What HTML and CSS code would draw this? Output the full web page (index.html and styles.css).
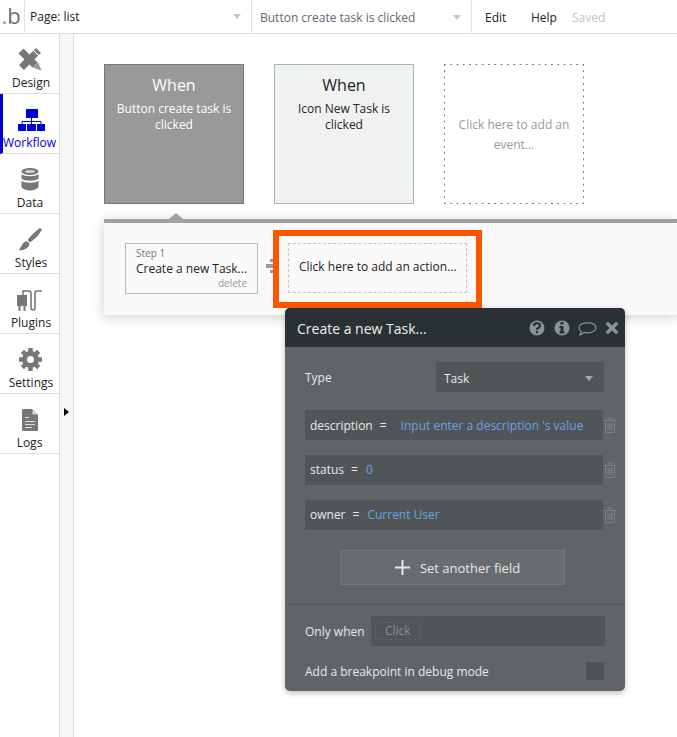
FILE: index.html
```html
<!DOCTYPE html>
<html lang="en">
<head>
    <meta charset="UTF-8">
    <title>Workflow editor</title>
    <link rel="stylesheet" href="styles.css">
</head>
<body>
    <div class="topbar">
        <div class="logo"><span class="logo-dot">.</span>b</div>
        <div class="select page-select">
            <span>Page: list</span>
            <i class="caret"></i>
        </div>
        <div class="select event-select">
            <span>Button create task is clicked</span>
            <i class="caret"></i>
        </div>
        <div class="menu">
            <span class="menu-edit">Edit</span>
            <span class="menu-help">Help</span>
            <span class="menu-saved">Saved</span>
        </div>
    </div>

    <div class="main">
        <div class="sidebar">
            <div class="tab">
                <svg class="tab-icon" width="24" height="24" viewBox="0 0 24 24">
                    <path fill="none" stroke="#777" stroke-width="7" d="M3 4 L17 18"/>
                    <path fill="#999" d="M14.500 20.500 L20 15 L23.500 23.500 Z"/>
                    <path fill="none" stroke="#777" stroke-width="7" stroke-dasharray="3 1 24" d="M20.500 3.500 L3.500 20.500"/>
                    <path fill="none" stroke="#777" stroke-width="4" d="M3 17 L7 21"/>
                </svg>
                <span>Design</span>
            </div>
            <div class="tab tab-active">
                <svg class="tab-icon" width="27" height="22" viewBox="0 0 27 22">
                    <path fill="#0000d8" d="M8 0 H20 V9 H8 Z M0 15 H8 V22 H0 Z M9 15 H18 V22 H9 Z M19 15 H27 V22 H19 Z"/>
                    <path fill="none" stroke="#0000d8" d="M13.500 9 V15 M4 15 V12.500 H23 V15"/>
                </svg>
                <span>Workflow</span>
            </div>
            <div class="tab">
                <svg class="tab-icon" width="18" height="23" viewBox="0 0 18 23">
                    <ellipse cx="9" cy="3.500" rx="8.500" ry="3.500" fill="#777"/>
                    <ellipse cx="9" cy="3.500" rx="5" ry="1.300" fill="#ddd"/>
                    <path fill="#777" d="M0.500 6 C3 9 15 9 17.500 6 V10.500 C15 13.500 3 13.500 0.500 10.500 Z M0.500 12.500 C3 15.500 15 15.500 17.500 12.500 V19 C15 23.500 3 23.500 0.500 19 Z"/>
                </svg>
                <span class="tab-label-plain">Data</span>
            </div>
            <div class="tab">
                <svg class="tab-icon" width="24" height="23" viewBox="0 0 24 23">
                    <path fill="#777" d="M22 0 L24 1.500 C21 7 17 11 12 14.500 L9.500 12 C13 7.500 17 3.500 22 0 Z M8.500 13 L11.500 15.500 C11 20 6 23 0.500 22 C3.500 20.500 3 15 8.500 13 Z"/>
                </svg>
                <span>Styles</span>
            </div>
            <div class="tab">
                <svg class="tab-icon" width="26" height="21" viewBox="0 0 26 21">
                    <path fill="#777" d="M0 5 H10 V16 H8.500 V21 H6.500 V16 H3.500 V21 H1.500 V16 H0 Z"/>
                    <path fill="none" stroke="#777" stroke-width="1.600" d="M6 5 V1 H12 Q14 1 14 3.500 V17.500 Q14 20 16 20 Q18 20 18 17.500 V3.500 Q18 1 20 1 H25"/>
                </svg>
                <span>Plugins</span>
            </div>
            <div class="tab">
                <svg class="tab-icon" width="23" height="23" viewBox="0 0 23 23">
                    <circle cx="11.500" cy="11.500" r="6" fill="none" stroke="#777" stroke-width="5"/>
                    <path fill="none" stroke="#777" stroke-width="4.500" d="M11.500 0 V4 M11.500 19 V23 M0 11.500 H4 M19 11.500 H23 M3.400 3.400 L6 6 M17 17 L19.600 19.600 M3.400 19.600 L6 17 M17 6 L19.600 3.400"/>
                </svg>
                <span>Settings</span>
            </div>
            <div class="tab tab-logs">
                <svg class="tab-icon" width="16" height="22" viewBox="0 0 16 22">
                    <path fill="#777" d="M1 0 H10 L16 6 V21 Q16 22 15 22 H1 Q0 22 0 21 V1 Q0 0 1 0 Z"/>
                    <path fill="none" stroke="#ddd" d="M3 8.500 H7 M3 12.500 H13 M3 15.500 H13 M3 18.500 H10"/>
                    <path fill="#ddd" d="M10.500 1 L15 5.500 H10.500 Z"/>
                </svg>
                <span class="tab-label-plain">Logs</span>
            </div>
        </div>
        <div class="strip"><i class="strip-arrow"></i></div>

        <div class="canvas">
            <div class="events">
                <div class="event event-selected">
                    <div class="event-title">When</div>
                    <div class="event-text">Button create task is clicked</div>
                </div>
                <div class="event event-other">
                    <div class="event-title">When</div>
                    <div class="event-text">Icon New Task is clicked</div>
                </div>
                <div class="event event-add">Click here to add an event...</div>
            </div>

            <div class="steps">
                <i class="steps-notch"></i>
                <div class="step">
                    <div class="step-num">Step 1</div>
                    <div class="step-name">Create a new Task...</div>
                    <div class="step-delete">delete</div>
                </div>
                <svg class="step-arrow" width="11" height="14" viewBox="0 0 11 14">
                    <path fill="#999" d="M4 0 H7 L10 3 H4 Z M0 5 H11 V9 H0 Z M4 11 H10 L7 14 H4 Z"/>
                </svg>
                <div class="highlight">
                    <div class="add-action">Click here to add an action...</div>
                </div>
            </div>
        </div>
    </div>

    <div class="popup">
        <div class="popup-head">
            <span class="popup-title">Create a new Task...</span>
            <svg class="popup-icons" width="90" height="18" viewBox="0 0 90 18">
                <circle cx="8" cy="9" r="7.500" fill="#8c9396"/>
                <path fill="none" stroke="#2a3133" stroke-width="2.200" d="M5 7 Q5 4.200 8 4.200 Q11 4.200 11 6.800 Q11 8.300 8.800 9.300 Q8 9.800 8 11"/>
                <rect x="6.900" y="12" width="2.200" height="2.200" fill="#2a3133"/>
                <circle cx="33" cy="9" r="7.500" fill="#8c9396"/>
                <path fill="#2a3133" d="M31.500 3 H34.500 V5.500 H31.500 Z M30.500 7 H34.500 V12.500 H35.500 V14.500 H30.500 V12.500 H31.500 V9 H30.500 Z"/>
                <path fill="none" stroke="#8c9396" stroke-width="1.200" d="M50 9 C50 5.500 54 3.800 58.500 3.800 C63 3.800 67 5.500 67 9 C67 12 63 13.800 58.500 13.800 Q56.500 13.800 55 13.400 Q53.500 15.500 50.800 15.800 Q52.300 14 52.300 12.700 Q50 11.300 50 9 Z"/>
                <path fill="#8c9396" d="M76.500 5 L79 2.700 L83 6.500 L87 2.700 L89.500 5 L85.500 9 L89.500 13 L87 15.300 L83 11.500 L79 15.300 L76.500 13 L80.500 9 Z"/>
            </svg>
        </div>
        <div class="popup-body">
            <div class="type-row">
                <span class="type-label">Type</span>
                <div class="type-select">
                    <span>Task</span>
                    <i class="caret caret-dark"></i>
                </div>
            </div>

            <div class="field-row">
                <div class="field field-first">
                    <span class="field-name">description</span><span class="field-eq">=</span><span class="field-value field-value-wide">Input enter a description 's value</span>
                </div>
                <svg class="trash" width="12" height="16" viewBox="0 0 12 16">
                    <path fill="none" stroke="#7b8083" d="M0 3.500 H12 M4 3.500 V1 H8 V3.500 M1.500 3.500 V15 Q1.500 15.500 2 15.500 H10 Q10.500 15.500 10.500 15 V3.500"/>
                    <path fill="none" stroke="#7b8083" stroke-width="1.300" d="M4 6 V13 M6 6 V13 M8 6 V13"/>
                </svg>
            </div>
            <div class="field-row">
                <div class="field">
                    <span class="field-name">status</span><span class="field-eq">=</span><span class="field-value">0</span>
                </div>
                <svg class="trash" width="12" height="16" viewBox="0 0 12 16">
                    <path fill="none" stroke="#7b8083" d="M0 3.500 H12 M4 3.500 V1 H8 V3.500 M1.500 3.500 V15 Q1.500 15.500 2 15.500 H10 Q10.500 15.500 10.500 15 V3.500"/>
                    <path fill="none" stroke="#7b8083" stroke-width="1.300" d="M4 6 V13 M6 6 V13 M8 6 V13"/>
                </svg>
            </div>
            <div class="field-row">
                <div class="field">
                    <span class="field-name">owner</span><span class="field-eq">=</span><span class="field-value">Current User</span>
                </div>
                <svg class="trash" width="12" height="16" viewBox="0 0 12 16">
                    <path fill="none" stroke="#7b8083" d="M0 3.500 H12 M4 3.500 V1 H8 V3.500 M1.500 3.500 V15 Q1.500 15.500 2 15.500 H10 Q10.500 15.500 10.500 15 V3.500"/>
                    <path fill="none" stroke="#7b8083" stroke-width="1.300" d="M4 6 V13 M6 6 V13 M8 6 V13"/>
                </svg>
            </div>

            <div class="set-field">
                <svg width="15" height="15" viewBox="0 0 15 15">
                    <path fill="#e4e6e7" d="M6.500 0 H8.500 V6.500 H15 V8.500 H8.500 V15 H6.500 V8.500 H0 V6.500 H6.500 Z"/>
                </svg>
                <span>Set another field</span>
            </div>
        </div>
        <div class="popup-foot">
            <div class="when-row">
                <span class="when-label">Only when</span>
                <div class="when-input"><span class="when-click">Click</span></div>
            </div>
            <div class="debug-row">
                <span>Add a breakpoint in debug mode</span>
                <i class="debug-check"></i>
            </div>
        </div>
    </div>
</body>
</html>
```

FILE: styles.css
```css
html, body {
    margin: 0;
    height: 100%;
    overflow: hidden;
}

body {
    position: relative;
    font-family: "Open Sans", sans-serif;
    font-size: 12px;
    color: #222;
    background: #fff;
}

.topbar {
    display: flex;
    height: 33px;
    border-bottom: 1px solid #dedede;
}

.logo {
    width: 25px;
    padding-right: 2px;
    border-right: 1px solid #e4e4e4;
    font-size: 22px;
    line-height: 30px;
    color: #6f6f6f;
    text-align: center;
    box-sizing: border-box;
}

.logo-dot {
    color: #9a9a9a;
}

.select {
    display: flex;
    align-items: center;
    justify-content: space-between;
    box-sizing: border-box;
    border-right: 1px solid #e4e4e4;
}

.page-select {
    width: 227px;
    padding: 0 10px 0 5px;
}

.event-select {
    width: 220px;
    padding: 2px 10px 0 8px;
    color: #5b6a75;
}

.caret {
    width: 0;
    height: 0;
    border-left: 4.500px solid transparent;
    border-right: 4.500px solid transparent;
    border-top: 5px solid #c3cacf;
}

.caret-dark {
    border-top-color: #a5aaad;
}

.menu span {
    position: absolute;
    top: 9px;
}

.menu-edit {
    left: 485px;
}

.menu-help {
    left: 531px;
}

.menu-saved {
    left: 572px;
    color: #c4c4c4;
}

.main {
    display: flex;
    height: 703px;
}

.sidebar {
    width: 59px;
    border-right: 1px solid #dedede;
}

.tab {
    display: flex;
    flex-direction: column;
    align-items: center;
    justify-content: flex-end;
    box-sizing: border-box;
    height: 60px;
    padding: 0 0 2px 1px;
    border-bottom: 1px solid #dedede;
    text-align: center;
    line-height: 17px;
}

.tab span {
    margin-left: 2px;
}

.tab .tab-label-plain {
    margin-left: 0;
}

.tab-icon {
    margin-bottom: 3px;
}

.tab-active {
    padding-left: 0;
    border-left: 3px solid #0000d8;
    color: #0000d8;
}

.tab-active span {
    margin-left: -3px;
}

.tab-logs {
    padding-left: 0;
}

.strip {
    position: relative;
    width: 13px;
    background: #f7f7f7;
    border-right: 1px solid #dedede;
}

.strip-arrow {
    position: absolute;
    left: 4px;
    top: 374px;
    width: 0;
    height: 0;
    border-top: 4px solid transparent;
    border-bottom: 4px solid transparent;
    border-left: 5px solid #000;
}

.canvas {
    flex: 1;
    padding: 30px 0 0 30px;
}

.events {
    display: flex;
    gap: 30px;
}

.event {
    box-sizing: border-box;
    width: 140px;
    height: 140px;
    text-align: center;
    padding: 8px 10px 0;
    line-height: 16px;
}

.event-title {
    font-size: 16px;
    line-height: 24px;
    margin-bottom: 4px;
}

.event-selected {
    background: #999;
    border: 1px solid #777;
    color: #fff;
}

.event-other {
    background: #f0f2f2;
    border: 1px solid #a9b5bb;
}

/* spaced dashes, a dashed border comes out too tight */
.event-add {
    display: flex;
    align-items: center;
    justify-content: center;
    padding: 2px 11px 0;
    line-height: 20px;
    color: #999;
    background-image:
        linear-gradient(to right, #777 2px, transparent 2px),
        linear-gradient(to right, #777 2px, transparent 2px),
        linear-gradient(to bottom, #777 2px, transparent 2px),
        linear-gradient(to bottom, #777 2px, transparent 2px);
    background-size: 6.300px 1px, 6.300px 1px, 1px 6.300px, 1px 6.300px;
    background-position: top left, bottom left, top left, top right;
    background-repeat: repeat-x, repeat-x, repeat-y, repeat-y;
}

.steps {
    position: relative;
    display: flex;
    align-items: flex-start;
    box-sizing: border-box;
    height: 96px;
    margin-top: 15px;
    padding: 20px 0 0 21px;
    background: #fafafa;
    border-top: 4px solid #a0a0a0;
    box-shadow: 0 2px 12px rgba(0, 0, 0, 0.2);
}

.steps-notch {
    position: absolute;
    left: 65px;
    top: -10px;
    width: 0;
    height: 0;
    border-left: 7px solid transparent;
    border-right: 7px solid transparent;
    border-bottom: 6px solid #a0a0a0;
}

.step {
    box-sizing: border-box;
    width: 133px;
    height: 51px;
    padding: 2px 10px 0;
    background: #fafafa;
    border: 1px solid #b9b9b9;
    line-height: 16px;
    white-space: nowrap;
}

.step-num {
    font-size: 10px;
    line-height: 14px;
    color: #777;
}

.step-name {
    padding-top: 1px;
}

.step-delete {
    margin-top: -1px;
    font-size: 10px;
    line-height: 14px;
    color: #999;
    text-align: right;
}

.step-arrow {
    flex-shrink: 0;
    margin: 16px 0 0 8px;
}

.highlight {
    flex-shrink: 0;
    box-sizing: border-box;
    width: 209px;
    height: 78px;
    margin: -13px 0 0 -4px;
    padding: 7px 9px;
    border: 6px solid #ff5500;
}

.add-action {
    box-sizing: border-box;
    height: 50px;
    padding-left: 10px;
    border: 1px dashed #c4c4c4;
    line-height: 45px;
}

.popup {
    position: absolute;
    left: 285px;
    top: 308px;
    width: 340px;
    height: 383px;
    border-radius: 5px;
    overflow: hidden;
    background: #5f6467;
    color: #e8e9ea;
    box-shadow: 0 2px 6px rgba(0, 0, 0, 0.25);
}

.popup-head {
    display: flex;
    align-items: center;
    justify-content: space-between;
    height: 39px;
    padding: 0 6px 0 12px;
    background: #2a3133;
    color: #f0f0f0;
}

.popup-title {
    font-size: 14px;
    padding-top: 2px;
}

.popup-body {
    box-sizing: border-box;
    height: 258px;
    padding: 15px 20px 0;
    border-bottom: 1px solid #55595c;
}

.type-row {
    display: flex;
    align-items: center;
    justify-content: space-between;
    height: 30px;
    margin-bottom: 18px;
    padding-right: 1px;
}

.type-select {
    display: flex;
    align-items: center;
    justify-content: space-between;
    box-sizing: border-box;
    width: 168px;
    height: 30px;
    padding: 2px 11px 0 8px;
    background: #515558;
}

.field-row {
    display: flex;
    align-items: center;
    gap: 1px;
    margin: 0 -14px 15px 0;
}

.field {
    box-sizing: border-box;
    width: 298px;
    height: 30px;
    padding-left: 5px;
    line-height: 30px;
    background: #515558;
    white-space: nowrap;
}

.field-first {
    line-height: 32px;
}

.field-eq {
    margin: 0 8px 0 7px;
}

.field-value {
    color: #64a5e6;
}

.field-value-wide {
    margin-left: 6px;
}

.set-field {
    display: flex;
    align-items: center;
    justify-content: center;
    gap: 10px;
    box-sizing: border-box;
    width: 225px;
    height: 35px;
    margin: 20px 0 0 35px;
    padding-left: 10px;
    background: #676c6f;
    border: 1px solid #73787b;
    font-size: 13px;
}

.popup-foot {
    padding-top: 11px;
}

.when-row {
    display: flex;
    align-items: center;
    padding-left: 20px;
}

.when-label {
    width: 66px;
}

.when-input {
    box-sizing: border-box;
    width: 234px;
    height: 30px;
    padding: 6px 4px;
    background: #515558;
}

.when-click {
    display: inline-block;
    box-sizing: border-box;
    height: 18px;
    padding: 0 9px;
    border: 1px dashed #5f6467;
    border-radius: 4px;
    line-height: 16px;
    color: #8b8f92;
}

.debug-row {
    display: flex;
    align-items: center;
    justify-content: space-between;
    margin-top: 16px;
    padding: 0 21px 0 20px;
}

.debug-check {
    width: 18px;
    height: 18px;
    background: #4e5255;
}
```
